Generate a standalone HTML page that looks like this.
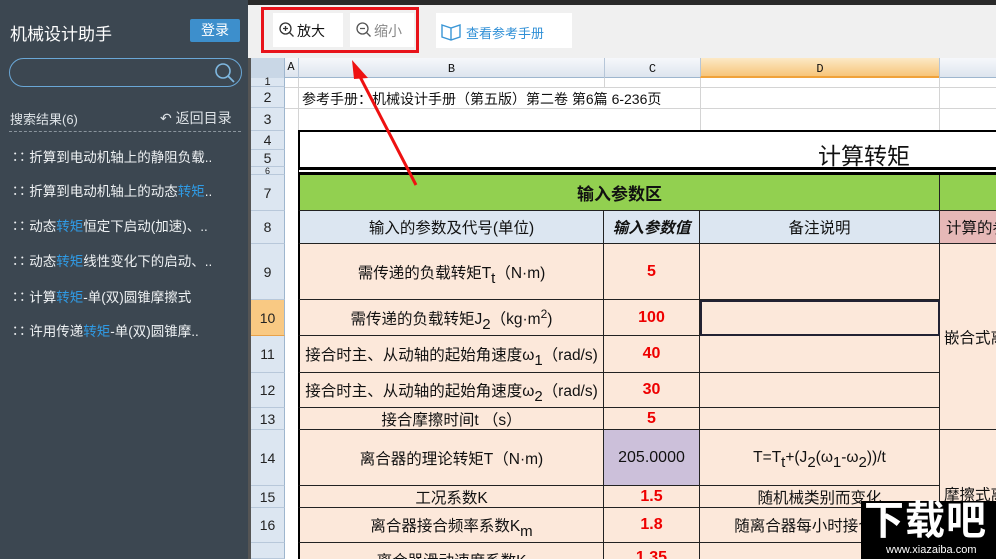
<!DOCTYPE html><html><head><meta charset="utf-8"><style>
*{margin:0;padding:0;box-sizing:border-box}
body{width:996px;height:559px;overflow:hidden;position:relative;background:#fff;font-family:"Liberation Sans","Noto Sans CJK SC",sans-serif;font-size:14px;color:#111}
.a{position:absolute}
.sb{left:0;top:0;width:248px;height:559px;background:#3c4751;color:#e8ecef}
.it{left:12px;font-size:13.5px;color:#eef1f3;white-space:nowrap}
.it b{font-weight:normal;color:#2f9be5}
.c{position:absolute;display:flex;align-items:center;justify-content:center;text-align:center;white-space:nowrap;border-right:1px solid #222;border-bottom:1px solid #222;font-size:15.5px;overflow:hidden}
.rh{position:absolute;left:251px;width:34px;background:#dce6f1;border-bottom:1px solid #b8c8da;border-right:1px solid #9eb6ce;font-size:14px;display:flex;align-items:center;justify-content:center;color:#222}
.red{color:#e00;font-weight:bold;font-size:16px}
.pk{background:#fce8da}
sub{font-size:15px;vertical-align:-5px;line-height:0}
sup{font-size:12px;vertical-align:6px;line-height:0}
</style></head><body>
<div class="a" style="left:0;top:0;width:996px;height:5px;background:#2a2a2a"></div>
<div class="a sb">
<div class="a" style="left:10px;top:20px;font-size:17px;color:#fff">机械设计助手</div>
<div class="a" style="left:190px;top:19px;width:50px;height:23px;background:#3d8fcc;color:#fff;font-size:14px;text-align:center;line-height:23px;border-radius:2px">登录</div>
<div class="a" style="left:9px;top:58px;width:233px;height:29px;border:1px solid #6aa7d6;border-radius:15px"></div>
<svg class="a" style="left:212px;top:60px" width="26" height="26"><circle cx="11" cy="11" r="7" fill="none" stroke="#7fb8e0" stroke-width="1.6"/><line x1="16" y1="16" x2="22" y2="22" stroke="#7fb8e0" stroke-width="1.8"/></svg>
<div class="a" style="left:10px;top:109px;font-size:13px;color:#dde2e6">搜索结果(6)</div>
<div class="a" style="left:160px;top:108px;font-size:14px;color:#dde2e6">↶ 返回目录</div>
<div class="a" style="left:9px;top:131px;width:232px;border-top:1px dashed #8a949d"></div>
<div class="a it" style="top:146px">∷ 折算到电动机轴上的静阻负载..</div>
<div class="a it" style="top:180px">∷ 折算到电动机轴上的动态<b>转矩</b>..</div>
<div class="a it" style="top:215px">∷ 动态<b>转矩</b>恒定下启动(加速)、..</div>
<div class="a it" style="top:250px">∷ 动态<b>转矩</b>线性变化下的启动、..</div>
<div class="a it" style="top:286px">∷ 计算<b>转矩</b>-单(双)圆锥摩擦式</div>
<div class="a it" style="top:320px">∷ 许用传递<b>转矩</b>-单(双)圆锥摩..</div>
</div>
<div class="a" style="left:248px;top:5px;width:748px;height:53px;background:#f0f0f0"></div>
<div class="a" style="left:273px;top:13px;width:70px;height:34px;background:#fff"></div>
<div class="a" style="left:350px;top:13px;width:64px;height:34px;background:#fff"></div>
<div class="a" style="left:436px;top:13px;width:136px;height:35px;background:#fff"></div>
<div class="a" style="left:261px;top:7px;width:158px;height:46px;border:3px solid #e8131a"></div>
<svg class="a" style="left:278px;top:21px" width="18" height="18"><circle cx="7.5" cy="7.5" r="5.5" fill="none" stroke="#333" stroke-width="1.3"/><path d="M5 7.5h5M7.5 5v5M11.5 11.5l4 4" stroke="#333" stroke-width="1.3"/></svg>
<div class="a" style="left:297px;top:21px;font-size:14px">放大</div>
<svg class="a" style="left:355px;top:21px" width="18" height="18"><circle cx="7.5" cy="7.5" r="5.5" fill="none" stroke="#555" stroke-width="1.3"/><path d="M5 7.5h5M11.5 11.5l4 4" stroke="#555" stroke-width="1.3"/></svg>
<div class="a" style="left:374px;top:21px;font-size:14px;color:#888">缩小</div>
<svg class="a" style="left:440px;top:21px" width="22" height="20"><path d="M2 4l9 3 9-3v12l-9 3-9-3zM11 7v12" fill="none" stroke="#3a96d6" stroke-width="1.4"/></svg>
<div class="a" style="left:466px;top:23px;font-size:13px;color:#2f8fd6">查看参考手册</div>
<div class="a" style="left:248px;top:58px;width:3px;height:501px;background:#555"></div>
<div class="a" style="left:251px;top:58px;width:745px;height:20px;background:linear-gradient(#f6f8fb,#dde5ee);border-bottom:1px solid #9eb6ce"></div>
<div class="a" style="left:251px;top:58px;width:34px;height:20px;background:#c9d7e6;border-right:1px solid #9eb6ce"></div>
<div class="a" style="left:284px;top:60px;width:14px;font-family:'Liberation Mono';font-size:12px;text-align:center">A</div>
<div class="a" style="left:298px;top:58px;width:306px;height:20px;border-left:1px solid #b6c6d8;font-family:'Liberation Mono';font-size:12px;text-align:center;line-height:22px">B</div>
<div class="a" style="left:604px;top:58px;width:96px;height:20px;border-left:1px solid #b6c6d8;font-family:'Liberation Mono';font-size:12px;text-align:center;line-height:22px">C</div>
<div class="a" style="left:700px;top:58px;width:239px;height:20px;background:linear-gradient(#fce9c6,#f7c57a);border-bottom:2px solid #f0a23a;border-left:1px solid #b6c6d8;font-family:'Liberation Mono';font-size:12px;text-align:center;line-height:22px">D</div>
<div class="a" style="left:939px;top:58px;height:20px;border-left:1px solid #b6c6d8"></div>
<div class="a" style="left:285px;top:78px;width:711px;height:53px;background:linear-gradient(#d4d4d4,#d4d4d4) 0 9px/100% 1px no-repeat,linear-gradient(#d4d4d4,#d4d4d4) 0 30px/100% 1px no-repeat"></div>
<div class="a" style="left:298px;top:78px;height:53px;border-left:1px solid #d4d4d4"></div>
<div class="a" style="left:604px;top:78px;height:9px;border-left:1px solid #d4d4d4"></div>
<div class="a" style="left:700px;top:78px;height:53px;border-left:1px solid #d4d4d4"></div>
<div class="a" style="left:939px;top:78px;height:53px;border-left:1px solid #d4d4d4"></div>
<div class="a" style="left:302px;top:89px;font-size:14px;white-space:nowrap">参考手册：机械设计手册（第五版）第二卷 第6篇 6-236页</div>
<div class="rh" style="top:78px;height:9px;font-size:11px;line-height:9px">1</div>
<div class="rh" style="top:87px;height:21px">2</div>
<div class="rh" style="top:108px;height:23px">3</div>
<div class="rh" style="top:131px;height:19px">4</div>
<div class="rh" style="top:150px;height:17px">5</div>
<div class="rh" style="top:167px;height:8px;font-size:9px">6</div>
<div class="rh" style="top:175px;height:36px">7</div>
<div class="rh" style="top:211px;height:33px">8</div>
<div class="rh" style="top:244px;height:56px">9</div>
<div class="rh" style="top:300px;height:36px;background:#f9c983;border-bottom-color:#e8a24a">10</div>
<div class="rh" style="top:336px;height:37px">11</div>
<div class="rh" style="top:373px;height:35px">12</div>
<div class="rh" style="top:408px;height:22px">13</div>
<div class="rh" style="top:430px;height:56px">14</div>
<div class="rh" style="top:486px;height:22px">15</div>
<div class="rh" style="top:508px;height:35px">16</div>
<div class="rh" style="top:543px;height:16px"></div>
<div class="a" style="left:298px;top:130px;width:698px;height:45px;background:#fff;border-top:2px solid #000;border-left:2px solid #000;border-bottom:8px double #000"></div>
<div class="a" style="left:818px;top:137px;font-size:23px">计算转矩</div>
<div class="c" style="left:298px;top:175px;width:642px;height:36px;background:#92d050;font-weight:bold;font-size:17px;border-left:2px solid #000">输入参数区</div>
<div class="c" style="left:940px;top:175px;width:56px;height:36px;background:#92d050;border-right:none"></div>
<div class="c" style="left:298px;top:211px;width:306px;height:33px;background:#dce6f1;border-left:2px solid #000">输入的参数及代号(单位)</div>
<div class="c" style="left:604px;top:211px;width:96px;height:33px;background:#dce6f1;font-weight:bold;font-style:italic">输入参数值</div>
<div class="c" style="left:700px;top:211px;width:240px;height:33px;background:#dce6f1">备注说明</div>
<div class="c" style="left:940px;top:211px;width:56px;height:33px;background:#e6b8b7;justify-content:flex-start;padding-left:6px;border-right:none">计算的参</div>
<div class="c pk" style="left:298px;top:244px;width:306px;height:56px;border-left:2px solid #000"><span>需传递的负载转矩T<sub>t</sub>（N·m)</span></div>
<div class="c pk red" style="left:604px;top:244px;width:96px;height:56px">5</div>
<div class="c pk" style="left:700px;top:244px;width:240px;height:56px"></div>
<div class="c pk" style="left:940px;top:244px;width:56px;height:186px;justify-content:flex-start;padding-left:4px;border-right:none">嵌合式离</div>
<div class="c pk" style="left:298px;top:300px;width:306px;height:36px;border-left:2px solid #000"><span>需传递的负载转矩J<sub>2</sub>（kg·m<sup>2</sup>)</span></div>
<div class="c pk red" style="left:604px;top:300px;width:96px;height:36px">100</div>
<div class="c pk" style="left:700px;top:300px;width:240px;height:36px;outline:2px solid #223;outline-offset:-2px"></div>
<div class="c pk" style="left:298px;top:336px;width:306px;height:37px;border-left:2px solid #000"><span>接合时主、从动轴的起始角速度ω<sub>1</sub>（rad/s)</span></div>
<div class="c pk red" style="left:604px;top:336px;width:96px;height:37px">40</div>
<div class="c pk" style="left:700px;top:336px;width:240px;height:37px"></div>
<div class="c pk" style="left:298px;top:373px;width:306px;height:35px;border-left:2px solid #000"><span>接合时主、从动轴的起始角速度ω<sub>2</sub>（rad/s)</span></div>
<div class="c pk red" style="left:604px;top:373px;width:96px;height:35px">30</div>
<div class="c pk" style="left:700px;top:373px;width:240px;height:35px"></div>
<div class="c pk" style="left:298px;top:408px;width:306px;height:22px;border-left:2px solid #000">接合摩擦时间t （s）</div>
<div class="c pk red" style="left:604px;top:408px;width:96px;height:22px">5</div>
<div class="c pk" style="left:700px;top:408px;width:240px;height:22px"></div>
<div class="c pk" style="left:298px;top:430px;width:306px;height:56px;border-left:2px solid #000">离合器的理论转矩T（N·m)</div>
<div class="c" style="left:604px;top:430px;width:96px;height:56px;background:#ccc0da;font-size:16px">205.0000</div>
<div class="c pk" style="left:700px;top:430px;width:240px;height:56px"><span>T=T<sub>t</sub>+(J<sub>2</sub>(ω<sub>1</sub>-ω<sub>2</sub>))/t</span></div>
<div class="c pk" style="left:940px;top:430px;width:56px;height:129px;justify-content:flex-start;padding-left:4px;border-right:none">摩擦式离</div>
<div class="c pk" style="left:298px;top:486px;width:306px;height:22px;border-left:2px solid #000">工况系数K</div>
<div class="c pk red" style="left:604px;top:486px;width:96px;height:22px">1.5</div>
<div class="c pk" style="left:700px;top:486px;width:240px;height:22px">随机械类别而变化</div>
<div class="c pk" style="left:298px;top:508px;width:306px;height:35px;border-left:2px solid #000"><span>离合器接合频率系数K<sub>m</sub></span></div>
<div class="c pk red" style="left:604px;top:508px;width:96px;height:35px">1.8</div>
<div class="c pk" style="left:700px;top:508px;width:240px;height:35px">随离合器每小时接合次数</div>
<div class="c pk" style="left:298px;top:543px;width:306px;height:16px;border-left:2px solid #000;align-items:flex-start;padding-top:6px;border-bottom:none">离合器滑动速度系数K</div>
<div class="c pk red" style="left:604px;top:543px;width:96px;height:16px;align-items:flex-start;padding-top:6px;border-bottom:none">1.35</div>
<div class="c pk" style="left:700px;top:543px;width:240px;height:16px;border-bottom:none"></div>
<svg class="a" style="left:340px;top:55px" width="90" height="140"><line x1="76" y1="130" x2="16" y2="14" stroke="#e11" stroke-width="3"/><path d="M12 5l16 18-14 1z" fill="#e11"/></svg>
<div class="a" style="left:861px;top:501px;width:135px;height:58px;background:#000"></div>
<div class="a" style="left:864px;top:499px;font-size:40px;font-weight:bold;color:#fff;letter-spacing:1px;line-height:44px">下载吧</div>
<div class="a" style="left:886px;top:544px;font-size:11px;color:#fff">www.xiazaiba.com</div>
</body></html>
